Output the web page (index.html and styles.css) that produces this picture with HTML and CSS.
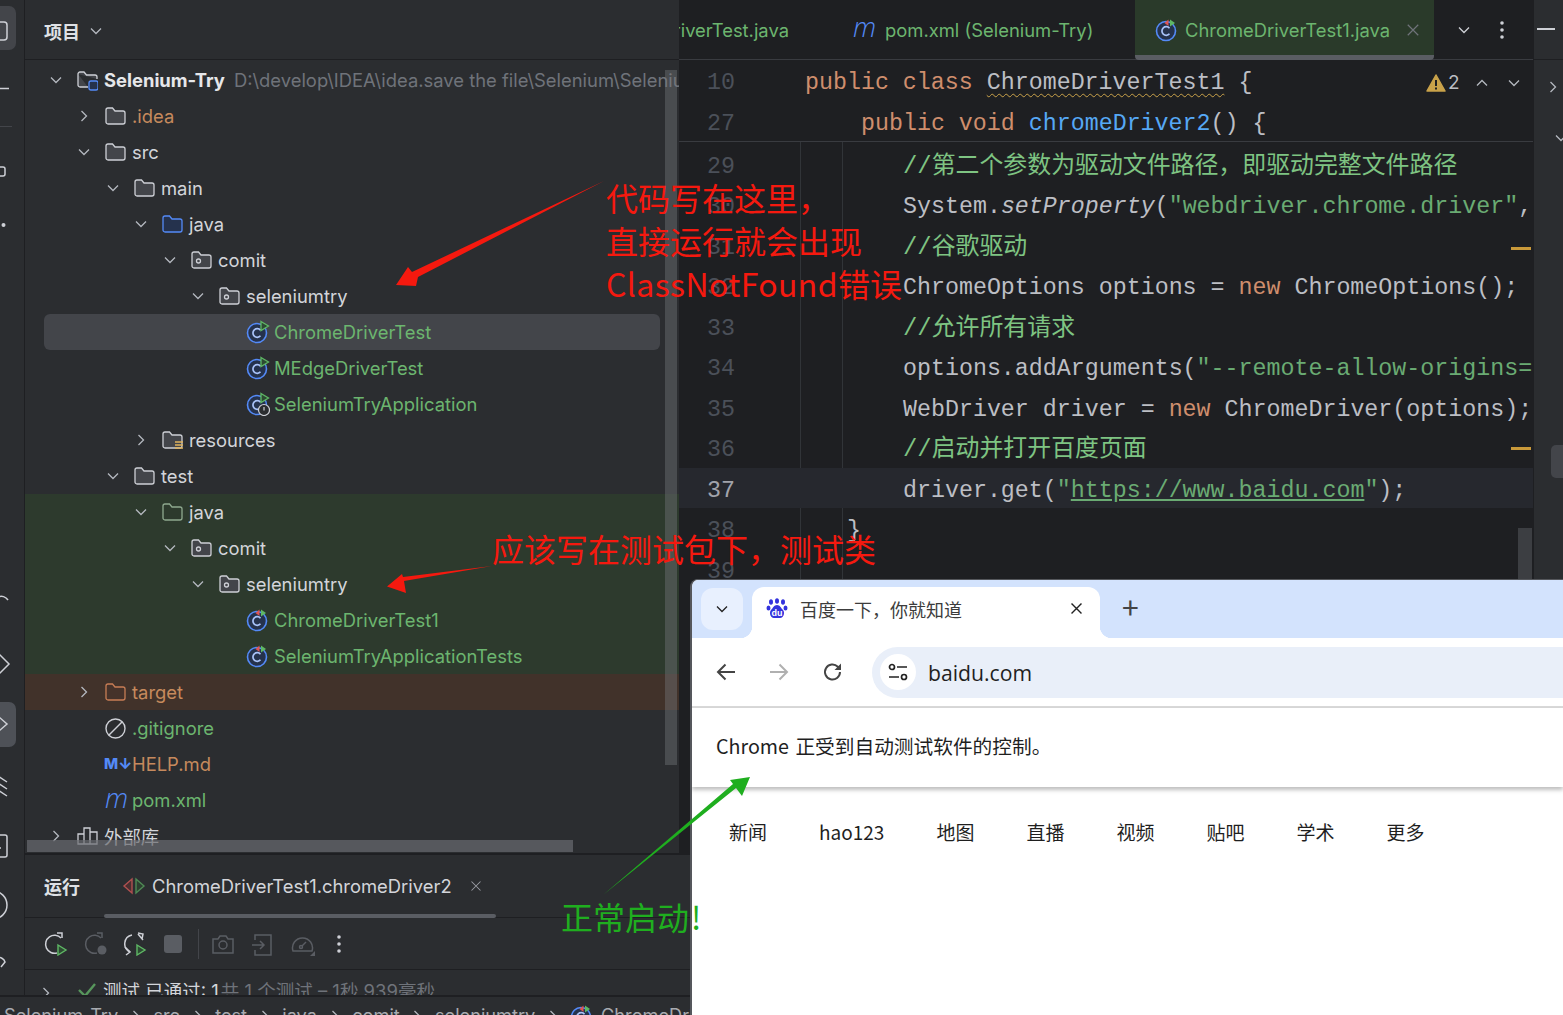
FILE: index.html
```html
<!DOCTYPE html>
<html lang="zh-CN">
<head>
  <meta charset="UTF-8">
  <title>Selenium-Try</title>
  <link rel="stylesheet" href="styles.css">
</head>
<body>
  <svg class="defs" width="0" height="0">
    <symbol id="chev-d" viewBox="0 0 16 16"><path d="M3 5.500l5 5 5-5" fill="none" stroke="currentColor" stroke-width="1.300"/></symbol>
    <symbol id="chev-r" viewBox="0 0 16 16"><path d="M5.500 3l5 5-5 5" fill="none" stroke="currentColor" stroke-width="1.300"/></symbol>
    <symbol id="close" viewBox="0 0 16 16"><path d="M2 2l12 12M14 2L2 14" fill="none" stroke="currentColor" stroke-width="1.400"/></symbol>
    <symbol id="folder" viewBox="0 0 21 18"><path d="M1 3a2 2 0 0 1 2-2h4.500l2.500 3h8a2 2 0 0 1 2 2v9a2 2 0 0 1-2 2H3a2 2 0 0 1-2-2z" fill="#43454a" stroke="#ced0d6" stroke-width="1.300"/></symbol>
    <symbol id="folder-blue" viewBox="0 0 21 18"><path d="M1 3a2 2 0 0 1 2-2h4.500l2.500 3h8a2 2 0 0 1 2 2v9a2 2 0 0 1-2 2H3a2 2 0 0 1-2-2z" fill="#25324d" stroke="#548af7" stroke-width="1.300"/></symbol>
    <symbol id="folder-green" viewBox="0 0 21 18"><path d="M1 3a2 2 0 0 1 2-2h4.500l2.500 3h8a2 2 0 0 1 2 2v9a2 2 0 0 1-2 2H3a2 2 0 0 1-2-2z" fill="#2d3a2d" stroke="#8fa98f" stroke-width="1.300"/></symbol>
    <symbol id="folder-orange" viewBox="0 0 21 18"><path d="M1 3a2 2 0 0 1 2-2h4.500l2.500 3h8a2 2 0 0 1 2 2v9a2 2 0 0 1-2 2H3a2 2 0 0 1-2-2z" fill="#45322a" stroke="#c77d55" stroke-width="1.300"/></symbol>
    <symbol id="folder-pkg" viewBox="0 0 21 18"><path d="M1 3a2 2 0 0 1 2-2h4.500l2.500 3h8a2 2 0 0 1 2 2v9a2 2 0 0 1-2 2H3a2 2 0 0 1-2-2z" fill="#43454a" stroke="#ced0d6" stroke-width="1.300"/><circle cx="7.500" cy="10" r="2" fill="none" stroke="#ced0d6" stroke-width="1.300"/></symbol>
    <symbol id="folder-res" viewBox="0 0 21 18"><path d="M1 3a2 2 0 0 1 2-2h4.500l2.500 3h8a2 2 0 0 1 2 2v9a2 2 0 0 1-2 2H3a2 2 0 0 1-2-2z" fill="#43454a" stroke="#ced0d6" stroke-width="1.300"/><path d="M13 11h8M13 14h8M13 17h8" stroke="#e0b25c" stroke-width="1.300"/></symbol>
    <symbol id="cls" viewBox="0 0 24 24"><circle cx="11" cy="13" r="9.500" fill="#25324d" stroke="#548af7" stroke-width="1.600"/><path d="M14.500 10.200a4.300 4.300 0 1 0 0 5.600" fill="none" stroke="#a9c3f9" stroke-width="1.700"/><path d="M15 1.500l7.500 4.500-7.500 4.500z" fill="#2d4a32" stroke="#5fb865" stroke-width="1.300"/></symbol>
    <symbol id="cls-boot" viewBox="0 0 24 24"><circle cx="11" cy="13" r="9.500" fill="#25324d" stroke="#548af7" stroke-width="1.600"/><path d="M14.500 10.200a4.300 4.300 0 1 0 0 5.600" fill="none" stroke="#a9c3f9" stroke-width="1.700"/><path d="M15 1.500l7.500 4.500-7.500 4.500z" fill="#2d4a32" stroke="#5fb865" stroke-width="1.300"/><circle cx="18" cy="18" r="5.500" fill="#2b2d30" stroke="#ced0d6" stroke-width="1.200"/><path d="M18 15v3.500" stroke="#ced0d6" stroke-width="1.200"/></symbol>
    <symbol id="cls-test" viewBox="0 0 24 24"><circle cx="11" cy="13" r="9.500" fill="#25324d" stroke="#548af7" stroke-width="1.600"/><path d="M14.500 10.200a4.300 4.300 0 1 0 0 5.600" fill="none" stroke="#a9c3f9" stroke-width="1.700"/><path d="M13.500 8V1.500L9.500 5z" fill="#e05555"/><path d="M15 1.500L20 5l-5 3.500z" fill="#5fb865"/></symbol>
  </svg>

  <div class="ide">
    <svg class="tool-stripe" width="25" height="995" viewBox="0 0 25 995">
      <path d="M24.500 0v995" stroke="#1e1f22"/>
      <rect x="-10" y="6" width="26" height="44" rx="7" fill="#43454a"/>
      <rect x="-8" y="22" width="15" height="18" rx="3" fill="none" stroke="#ced0d6" stroke-width="1.500"/>
      <path d="M0 88.500h9" stroke="#ced0d6" stroke-width="1.500"/>
      <path d="M0 126.500h12" stroke="#43454a"/>
      <rect x="-6" y="167" width="11" height="9" rx="2" fill="none" stroke="#ced0d6" stroke-width="1.500"/>
      <circle cx="3.500" cy="225" r="2" fill="#ced0d6"/>
      <path d="M-2 597a8 8 0 0 1 10 3" fill="none" stroke="#ced0d6" stroke-width="1.500"/>
      <path d="M-4 651l13 13-13 13" fill="none" stroke="#ced0d6" stroke-width="1.500"/>
      <rect x="-10" y="702" width="26" height="45" rx="7" fill="#4e5157"/>
      <path d="M-1 717l8 7-8 7" fill="none" stroke="#ced0d6" stroke-width="1.500"/>
      <path d="M-2 776l9 6M-2 783l9 6M-2 790l9 6" fill="none" stroke="#ced0d6" stroke-width="1.500"/>
      <rect x="-8" y="835" width="15" height="22" rx="2" fill="none" stroke="#ced0d6" stroke-width="1.500"/>
      <path d="M-1 848h2" stroke="#ced0d6" stroke-width="1.500"/>
      <circle cx="-7" cy="905" r="14" fill="none" stroke="#ced0d6" stroke-width="1.500"/>
      <path d="M-3 958a6 6 0 0 1 8 4l-4 5" fill="none" stroke="#ced0d6" stroke-width="1.500"/>
    </svg>

    <section class="project">
      <header class="panel-head">
        <span class="panel-title">项目</span>
        <svg class="chev muted"><use href="#chev-d"/></svg>
      </header>
      <div class="tree">
        <div class="row lv0"><svg class="chev"><use href="#chev-d"/></svg>
          <svg class="ico ico-tall" viewBox="0 0 21 21"><path d="M1 4a2 2 0 0 1 2-2h4l2.500 3h8.500a2 2 0 0 1 2 2v2M11 17H3a2 2 0 0 1-2-2V4" fill="#43454a" stroke="#ced0d6" stroke-width="1.300"/><rect x="12" y="11" width="9" height="9" rx="2" fill="#25324d" stroke="#548af7" stroke-width="1.300"/></svg>
          <b class="root-name">Selenium-Try</b><span class="path">D:\develop\IDEA\idea.save the file\Selenium\Selenium-Try</span></div>
        <div class="row lv1"><svg class="chev"><use href="#chev-r"/></svg><svg class="ico"><use href="#folder"/></svg><span class="t-orange">.idea</span></div>
        <div class="row lv1"><svg class="chev"><use href="#chev-d"/></svg><svg class="ico"><use href="#folder"/></svg><span>src</span></div>
        <div class="row lv2"><svg class="chev"><use href="#chev-d"/></svg><svg class="ico"><use href="#folder"/></svg><span>main</span></div>
        <div class="row lv3"><svg class="chev"><use href="#chev-d"/></svg><svg class="ico"><use href="#folder-blue"/></svg><span>java</span></div>
        <div class="row lv4"><svg class="chev"><use href="#chev-d"/></svg><svg class="ico"><use href="#folder-pkg"/></svg><span>comit</span></div>
        <div class="row lv5"><svg class="chev"><use href="#chev-d"/></svg><svg class="ico"><use href="#folder-pkg"/></svg><span>seleniumtry</span></div>
        <div class="row lv6 selected"><span class="chev"></span><svg class="ico-c"><use href="#cls"/></svg><span class="t-green">ChromeDriverTest</span></div>
        <div class="row lv6"><span class="chev"></span><svg class="ico-c"><use href="#cls"/></svg><span class="t-green">MEdgeDriverTest</span></div>
        <div class="row lv6"><span class="chev"></span><svg class="ico-c"><use href="#cls-boot"/></svg><span class="t-green">SeleniumTryApplication</span></div>
        <div class="row lv3"><svg class="chev"><use href="#chev-r"/></svg><svg class="ico"><use href="#folder-res"/></svg><span>resources</span></div>
        <div class="row lv2"><svg class="chev"><use href="#chev-d"/></svg><svg class="ico"><use href="#folder"/></svg><span>test</span></div>
        <div class="row lv3 bg-test"><svg class="chev"><use href="#chev-d"/></svg><svg class="ico"><use href="#folder-green"/></svg><span>java</span></div>
        <div class="row lv4 bg-test"><svg class="chev"><use href="#chev-d"/></svg><svg class="ico"><use href="#folder-pkg"/></svg><span>comit</span></div>
        <div class="row lv5 bg-test"><svg class="chev"><use href="#chev-d"/></svg><svg class="ico"><use href="#folder-pkg"/></svg><span>seleniumtry</span></div>
        <div class="row lv6 bg-test"><span class="chev"></span><svg class="ico-c"><use href="#cls-test"/></svg><span class="t-green">ChromeDriverTest1</span></div>
        <div class="row lv6 bg-test"><span class="chev"></span><svg class="ico-c"><use href="#cls-test"/></svg><span class="t-green">SeleniumTryApplicationTests</span></div>
        <div class="row lv1 bg-target"><svg class="chev"><use href="#chev-r"/></svg><svg class="ico"><use href="#folder-orange"/></svg><span class="t-orange">target</span></div>
        <div class="row lv1"><span class="chev"></span><svg class="ico ico-tall" viewBox="0 0 21 21"><circle cx="10.500" cy="10.500" r="9.500" fill="none" stroke="#ced0d6" stroke-width="1.400"/><path d="M4 17L17 4" stroke="#ced0d6" stroke-width="1.400"/></svg><span class="t-green">.gitignore</span></div>
        <div class="row lv1"><span class="chev"></span><span class="ico md-ico">M↓</span><span class="t-orange">HELP.md</span></div>
        <div class="row lv1"><span class="chev"></span><span class="ico m-ico">m</span><span class="t-green">pom.xml</span></div>
        <div class="row lv0"><svg class="chev"><use href="#chev-r"/></svg><svg class="ico" viewBox="0 0 21 18"><path d="M1 7h6v10H1zM7 1h6v16H7zM13 5h7v12h-7z" fill="none" stroke="#ced0d6" stroke-width="1.300"/></svg><span>外部库</span></div>
      </div>
      <div class="scroll-v"></div>
      <div class="scroll-h"></div>
    </section>

    <section class="editor">
      <div class="tabs">
        <div class="tab tab-cut"><span class="t-green">ChromeDriverTest.java</span></div>
        <div class="tab tab-pom"><span class="m-ico">m</span><span class="t-green">pom.xml (Selenium-Try)</span></div>
        <div class="tab tab-active"><svg class="ico-c"><use href="#cls-test"/></svg><span class="t-green">ChromeDriverTest1.java</span><svg class="tab-x"><use href="#close"/></svg></div>
        <svg class="chev tab-more"><use href="#chev-d"/></svg>
        <svg class="tab-dots" width="4" height="18" viewBox="0 0 4 18"><circle cx="2" cy="2" r="1.800"/><circle cx="2" cy="9" r="1.800"/><circle cx="2" cy="16" r="1.800"/></svg>
      </div>
      <div class="sticky">
        <div class="line"><span class="num">10</span><code class="in0"><i class="kw">public class </i><span class="warn">ChromeDriverTest1</span> {</code></div>
        <div class="line"><span class="num">27</span><code class="in1"><i class="kw">public void </i><i class="fn">chromeDriver2</i>() {</code></div>
        <div class="inspect">
          <svg width="20" height="18" viewBox="0 0 20 18"><path d="M10 1l9 16H1z" fill="#c9a24a" stroke="#c9a24a" stroke-width="1.500" stroke-linejoin="round"/><path d="M10 6v6M10 13.500v2" stroke="#1e1f22" stroke-width="2"/></svg>
          <span class="inspect-n">2</span>
          <svg class="chev up"><use href="#chev-d"/></svg>
          <svg class="chev"><use href="#chev-d"/></svg>
        </div>
      </div>
      <div class="code">
        <div class="line"><span class="num">29</span><code class="in2 cm">//第二个参数为驱动文件路径，即驱动完整文件路径</code></div>
        <div class="line"><span class="num">30</span><code class="in2">System.<em>setProperty</em>(<i class="str">"webdriver.chrome.driver"</i>,</code></div>
        <div class="line"><span class="num">31</span><code class="in2 cm">//谷歌驱动</code></div>
        <div class="line"><span class="num">32</span><code class="in2">ChromeOptions options = <i class="kw">new </i>ChromeOptions();</code></div>
        <div class="line"><span class="num">33</span><code class="in2 cm">//允许所有请求</code></div>
        <div class="line"><span class="num">34</span><code class="in2">options.addArguments(<i class="str">"--remote-allow-origins=*"</i>);</code></div>
        <div class="line"><span class="num">35</span><code class="in2">WebDriver driver = <i class="kw">new </i>ChromeDriver(options);</code></div>
        <div class="line"><span class="num">36</span><code class="in2 cm">//启动并打开百度页面</code></div>
        <div class="line current"><span class="num">37</span><code class="in2">driver.get(<i class="str">"<u>https://www.baidu.com</u>"</i>);</code></div>
        <div class="line"><span class="num">38</span><code class="in3">}</code></div>
        <div class="line"><span class="num">39</span><code class="in0"></code></div>
        <span class="mark mark-a"></span>
        <span class="mark mark-b"></span>
        <span class="scroll-ed"></span>
      </div>
    </section>

    <aside class="right-stripe">
      <div class="rs-top"><span class="rs-min"></span></div>
      <svg class="chev rs-chev"><use href="#chev-r"/></svg>
      <svg class="chev rs-chev2"><use href="#chev-d"/></svg>
      <span class="rs-thumb"></span>
    </aside>

    <section class="run">
      <div class="run-head">
        <span class="panel-title">运行</span>
        <div class="run-tab">
          <svg width="24" height="18" viewBox="0 0 24 18"><path d="M10 2L2 9l8 7z" fill="#4a2f30" stroke="#b05050" stroke-width="1.400"/><path d="M14 2l8 7-8 7z" fill="#2d3f30" stroke="#4f8a55" stroke-width="1.400"/></svg>
          <span>ChromeDriverTest1.chromeDriver2</span>
          <svg class="run-x"><use href="#close"/></svg>
        </div>
      </div>
      <div class="run-tools">
        <svg class="tool" viewBox="0 0 24 24"><path d="M17 6a9 9 0 1 0-4 15" fill="none" stroke="#ced0d6" stroke-width="1.500"/><path d="M13 1h5v5" fill="none" stroke="#ced0d6" stroke-width="1.500"/><path d="M14 13l8 5-8 5z" fill="#2d4a32" stroke="#5fb865" stroke-width="1.400"/></svg>
        <svg class="tool" viewBox="0 0 24 24"><path d="M17 6a9 9 0 1 0-4 15" fill="none" stroke="#5a5d63" stroke-width="1.500"/><path d="M13 1h5v5" fill="none" stroke="#5a5d63" stroke-width="1.500"/><circle cx="18" cy="18" r="4.500" fill="#5a5d63"/></svg>
        <svg class="tool" viewBox="0 0 24 24"><path d="M8 3a9 9 0 0 0-2 17" fill="none" stroke="#ced0d6" stroke-width="1.500"/><path d="M1 15l5 5-4 3M14 1l5 1-1 5M14 2l5 6" fill="none" stroke="#ced0d6" stroke-width="1.500"/><path d="M13 13l8 5-8 5z" fill="#2d4a32" stroke="#5fb865" stroke-width="1.400"/></svg>
        <span class="stop"></span>
        <span class="tool-sep"></span>
        <svg class="tool" viewBox="0 0 24 24"><path d="M2 7h5l2-3h6l2 3h5v14H2z" fill="none" stroke="#5a5d63" stroke-width="1.500"/><circle cx="12" cy="13" r="4" fill="none" stroke="#5a5d63" stroke-width="1.500"/></svg>
        <svg class="tool" viewBox="0 0 24 24"><path d="M4 8V3h16v20H4v-5M1 13h12M9 9l4 4-4 4" fill="none" stroke="#5a5d63" stroke-width="1.500"/></svg>
        <svg class="tool" viewBox="0 0 24 24"><path d="M2 19a10 10 0 1 1 19 0z" fill="none" stroke="#5a5d63" stroke-width="1.500"/><circle cx="10" cy="15" r="1.500" fill="none" stroke="#5a5d63" stroke-width="1.500"/><path d="M11 14l4-4" stroke="#5a5d63" stroke-width="1.500"/><path d="M24 19v5h-5z" fill="#5a5d63"/></svg>
        <svg class="tab-dots run-dots" width="4" height="18" viewBox="0 0 4 18"><circle cx="2" cy="2" r="1.800"/><circle cx="2" cy="9" r="1.800"/><circle cx="2" cy="16" r="1.800"/></svg>
      </div>
      <div class="run-result">
        <svg class="chev"><use href="#chev-r"/></svg>
        <svg width="20" height="18" viewBox="0 0 20 18"><path d="M2 9l6 6L18 3" fill="none" stroke="#57965c" stroke-width="2.400"/></svg>
        <span>测试 已通过: 1</span><span class="dim">共 1 个测试 – 1秒 939毫秒</span>
      </div>
    </section>

    <footer class="status">
      <span>Selenium-Try</span><svg class="chev"><use href="#chev-r"/></svg>
      <span>src</span><svg class="chev"><use href="#chev-r"/></svg>
      <span>test</span><svg class="chev"><use href="#chev-r"/></svg>
      <span>java</span><svg class="chev"><use href="#chev-r"/></svg>
      <span>comit</span><svg class="chev"><use href="#chev-r"/></svg>
      <span>seleniumtry</span><svg class="chev"><use href="#chev-r"/></svg>
      <svg class="ico-c"><use href="#cls-test"/></svg><span class="status-last">ChromeDriverTest1</span>
    </footer>
  </div>

  <div class="browser">
    <div class="strip">
      <span class="tab-search"><svg class="chev"><use href="#chev-d"/></svg></span>
      <div class="b-tab">
        <svg class="paw" width="22" height="22" viewBox="0 0 22 22">
          <ellipse cx="5" cy="4" rx="2" ry="2.800" fill="#3333dd"/><ellipse cx="11" cy="3" rx="2" ry="2.800" fill="#3333dd"/><ellipse cx="17" cy="4" rx="2" ry="2.800" fill="#3333dd"/><ellipse cx="2.500" cy="10" rx="2" ry="2.600" fill="#3333dd"/><ellipse cx="19.500" cy="10" rx="2" ry="2.600" fill="#3333dd"/>
          <path d="M11 7c3 0 4 3 6 5s1 8-3 8H8c-4 0-5-6-3-8s3-5 6-5z" fill="#3333dd"/>
          <text x="11" y="18" class="paw-du">du</text>
        </svg>
        <span class="b-title">百度一下，你就知道</span>
        <svg class="b-x"><use href="#close"/></svg>
      </div>
      <span class="b-plus">+</span>
    </div>
    <div class="toolbar">
      <svg class="nav" viewBox="0 0 20 20"><path d="M19 10H2M9.500 2.500L2 10l7.500 7.500" fill="none" stroke="#444" stroke-width="2"/></svg>
      <svg class="nav" viewBox="0 0 20 20"><path d="M1 10h17M10.500 2.500L18 10l-7.500 7.500" fill="none" stroke="#b0b0b0" stroke-width="2"/></svg>
      <svg class="nav nav-reload" viewBox="0 0 20 20"><path d="M17 10a7.500 7.500 0 1 1-2.200-5.300L17 7" fill="none" stroke="#444" stroke-width="2"/><path d="M18 1.500V8h-6.500z" fill="#444"/></svg>
      <div class="omni">
        <span class="site-ico"><svg width="20" height="20" viewBox="0 0 20 20"><circle cx="4" cy="5" r="2.500" fill="none" stroke="#222" stroke-width="1.700"/><path d="M9 5h10M1 15h10" stroke="#222" stroke-width="1.700"/><circle cx="16" cy="15" r="2.500" fill="none" stroke="#222" stroke-width="1.700"/></svg></span>
        <span class="url">baidu.com</span>
      </div>
    </div>
    <div class="infobar">Chrome 正受到自动测试软件的控制。</div>
    <nav class="baidu-nav">
      <a>新闻</a><a>hao123</a><a>地图</a><a>直播</a><a>视频</a><a>贴吧</a><a>学术</a><a>更多</a>
    </nav>
  </div>

  <svg class="arrows" width="1563" height="1015" viewBox="0 0 1563 1015">
    <polygon points="604,181 418,277 416,286 396,285 408,267 412,272" fill="#f5190f"/>
    <polygon points="492,566 404,581 406,593 387,586.500 402,574 403,577" fill="#f5190f"/>
    <polygon points="603,895 736,788 742,796 750,777 730,780 733,784" fill="#1fae1f"/>
  </svg>
  <div class="note note-red note-a">代码写在这里，<br>直接运行就会出现<br><span class="note-latin">ClassNotFound</span>错误</div>
  <div class="note note-red note-b">应该写在测试包下，测试类</div>
  <div class="note note-green note-c">正常启动<span class="note-bang">!</span></div>
</body>
</html>
```

FILE: styles.css
```css
html, body {
  margin: 0;
  padding: 0;
  height: 100%;
  overflow: hidden;
  background-color: #1e1f22;
}
body {
  position: relative;
  width: 1563px;
  height: 1015px;
  font-family: Inter, "Noto Sans CJK SC", sans-serif;
  font-size: 18.400px;
  color: #d3d5da;
}
.defs {
  position: absolute;
}

/* IDE window */
.ide {
  display: grid;
  grid-template-columns: 25px 654px 1fr 30px;
  grid-template-rows: 853px 142px 20px;
  height: 1015px;
}
.tool-stripe {
  grid-row: 1 / 3;
  background-color: #2b2d30;
}
.chev {
  width: 16px;
  height: 16px;
  flex: none;
  color: #b4b8bf;
}
.ico {
  width: 21px;
  height: 18px;
  flex: none;
}
.ico-tall {
  height: 21px;
}
.ico-c {
  width: 24px;
  height: 24px;
  flex: none;
}

/* project tree */
.project {
  position: relative;
  background-color: #2b2d30;
  overflow: hidden;
}
.panel-head {
  display: flex;
  align-items: center;
  gap: 8px;
  height: 60px;
  padding: 2px 0 0 19px;
  box-sizing: border-box;
  border-bottom: 1px solid #1e1f22;
}
.panel-title {
  font-size: 18px;
  font-weight: 700;
  color: #dfe1e5;
}
.tree {
  padding-top: 2px;
}
.row {
  display: flex;
  align-items: center;
  height: 36px;
  white-space: nowrap;
  overflow: hidden;
}
.row .chev {
  margin-right: 13px;
}
.row .ico {
  margin-right: 6px;
}
.row .ico-c {
  margin: 0 4px 0 -1px;
}
.lv0 { padding-left: 23px; }
.lv1 { padding-left: 51px; }
.lv2 { padding-left: 80px; }
.lv3 { padding-left: 108px; }
.lv4 { padding-left: 137px; }
.lv5 { padding-left: 165px; }
.lv6 { padding-left: 193px; }
.selected {
  background-color: #43454a;
  border-radius: 6px;
  margin: 0 19px;
  padding-left: 174px;
}
.bg-test { background-color: #2d3a2d; }
.bg-target { background-color: #41322a; }
.root-name {
  font-weight: 700;
  color: #e6e7ea;
  margin-right: 9px;
}
.path { color: #6f737a; }
.t-orange { color: #c68a5d; }
.t-green { color: #6cb56f; }
.row .md-ico {
  width: 23px;
  margin: 0 5px 0 -1px;
  font-size: 15px;
  font-weight: 800;
  color: #548af7;
  white-space: nowrap;
  line-height: 18px;
}
.m-ico {
  font-family: "Open Sans", sans-serif;
  font-style: italic;
  font-weight: 300;
  font-size: 27px;
  line-height: 18px;
  color: #548af7;
}
.row .m-ico {
  margin-top: -5px;
}
.scroll-v {
  position: absolute;
  left: 640px;
  top: 70px;
  width: 12px;
  height: 695px;
  background-color: rgba(120, 122, 128, 0.4);
}
.scroll-h {
  position: absolute;
  left: 2px;
  top: 840px;
  width: 546px;
  height: 12px;
  background-color: rgba(105, 107, 112, 0.7);
}

/* editor */
.editor {
  position: relative;
  background-color: #1e1f22;
  overflow: hidden;
  min-width: 0;
}
.tabs {
  display: flex;
  align-items: center;
  height: 60px;
  box-sizing: border-box;
  border-bottom: 1px solid #393b40;
  white-space: nowrap;
}
.tab {
  display: flex;
  align-items: center;
  height: 100%;
  box-sizing: border-box;
  flex: none;
}
.tab-cut {
  width: 146px;
  justify-content: flex-end;
  padding-right: 36px;
  overflow: hidden;
}
.tab-pom {
  width: 310px;
  padding-left: 28px;
  gap: 10px;
}
.tab-pom .m-ico {
  width: 22px;
  margin-top: -5px;
}
.tab-active {
  width: 299px;
  height: 60px;
  padding: 5px 0 0 20px;
  gap: 6px;
  background-color: #2a3a2a;
  border-bottom: 5px solid #5a5d63;
  border-radius: 0 0 4px 4px;
}
.tab-x {
  width: 14px;
  height: 14px;
  margin-left: 10px;
  color: #6f737a;
}
.tab-more {
  margin-left: 22px;
  color: #ced0d6;
}
.tab-dots {
  margin-left: 28px;
  fill: #ced0d6;
}
.sticky {
  position: relative;
  border-bottom: 1px solid #393b40;
}
.line {
  display: flex;
  height: 40.700px;
  line-height: 46.700px;
  white-space: nowrap;
  overflow: hidden;
}
.num {
  width: 56px;
  text-align: right;
  flex: none;
  font-family: "Liberation Mono", monospace;
  font-size: 23.300px;
  color: #4b5059;
}
code {
  font-family: "Liberation Mono", "Noto Sans CJK SC", monospace;
  font-size: 23.300px;
  color: #bcbec4;
}
code i { font-style: normal; }
code em { font-style: italic; }
.in0 { padding-left: 70px; }
.in1 { padding-left: 126px; }
.in2 { padding-left: 168px; }
.in3 { padding-left: 112px; }
.kw { color: #cf8e6d; }
.fn { color: #56a8f5; }
.str { color: #6aab73; }
.cm { color: #7ec482; font-size: 23.900px; }
.warn {
  text-decoration: underline wavy #c9a24a 1px;
  text-underline-offset: 4px;
}
.inspect {
  position: absolute;
  top: 11px;
  left: 747px;
  display: flex;
  align-items: center;
  gap: 2px;
}
.inspect-n {
  color: #bcbec4;
  font-size: 19px;
  margin-right: 12px;
}
.inspect .chev { margin-right: 14px; }
.up { transform: rotate(180deg); }
.code {
  position: relative;
  padding-top: 1.600px;
  background-image: linear-gradient(#313438, #313438), linear-gradient(#313438, #313438);
  background-size: 1px 100%, 1px 100%;
  background-position: 121px 0, 163px 0;
  background-repeat: no-repeat;
}
.code .line {
  height: 40.500px;
}
.current {
  background-color: #26282e;
}
.current .num { color: #a1a3ab; }
.mark {
  position: absolute;
  left: 832px;
  width: 20px;
  height: 3px;
  background-color: #c9993a;
}
.mark-a { top: 105px; }
.mark-b { top: 305px; }
.scroll-ed {
  position: absolute;
  left: 839px;
  top: 386px;
  width: 14px;
  height: 60px;
  background-color: #3c3e42;
}

/* right tool window bar */
.right-stripe {
  position: relative;
  background-color: #2b2d30;
  border-left: 1px solid #1e1f22;
  overflow: hidden;
}
.rs-top {
  height: 60px;
  border-bottom: 1px solid #1e1f22;
  box-sizing: border-box;
}
.rs-min {
  position: absolute;
  left: 3px;
  top: 28px;
  width: 18px;
  height: 2px;
  background-color: #ced0d6;
}
.rs-chev {
  position: absolute;
  left: 11px;
  top: 79px;
}
.rs-chev2 {
  position: absolute;
  left: 19px;
  top: 130px;
}
.rs-thumb {
  position: absolute;
  left: 17px;
  top: 445px;
  width: 20px;
  height: 33px;
  border-radius: 5px;
  background-color: #43454a;
}

/* run panel */
.run {
  grid-column: 2 / 5;
  background-color: #2b2d30;
  border-top: 2px solid #1e1f22;
  box-sizing: border-box;
  overflow: hidden;
}
.run-head {
  display: flex;
  align-items: center;
  height: 62px;
  padding-left: 19px;
  border-bottom: 1px solid #1e1f22;
  position: relative;
}
.run-tab {
  display: flex;
  align-items: center;
  gap: 6px;
  margin-left: 42px;
}
.run-tab::after {
  content: "";
  position: absolute;
  left: 79px;
  bottom: -1px;
  width: 392px;
  height: 4px;
  border-radius: 2px;
  background-color: #5a5d63;
}
.run-x {
  width: 12px;
  height: 12px;
  margin-left: 12px;
  color: #9a9da3;
}
.run-tools {
  display: flex;
  align-items: center;
  height: 51px;
  padding-left: 19px;
  border-bottom: 1px solid #1e1f22;
}
.tool {
  width: 24px;
  height: 24px;
  margin-right: 16px;
  flex: none;
}
.stop {
  width: 18px;
  height: 18px;
  border-radius: 3px;
  background-color: #5a5d63;
  margin: 0 16px 0 0;
  flex: none;
}
.tool-sep {
  width: 1px;
  height: 30px;
  background-color: #43454a;
  margin-right: 12px;
}
.run-dots { margin-left: 6px; }
.run-result {
  display: flex;
  align-items: center;
  height: 40px;
  padding-left: 13px;
  font-size: 18.500px;
  white-space: nowrap;
}
.run-result .chev { margin: 6px 23px 0 0; }
.run-result svg + svg { margin-right: 6px; }
.dim {
  color: #6f737a;
  margin-left: 2px;
}

/* breadcrumb bar */
.status {
  grid-column: 1 / 5;
  display: flex;
  align-items: flex-start;
  gap: 9.600px;
  padding: 7px 0 0 4px;
  background-color: #2b2d30;
  border-top: 2px solid #1e1f22;
  box-sizing: border-box;
  height: 20px;
  overflow: hidden;
  white-space: nowrap;
  font-size: 18.200px;
  color: #a8abb0;
  line-height: 22px;
}
.status .chev { margin-top: 4px; }
.status-last { margin-left: -3px; }

/* chrome window on top */
.browser {
  position: absolute;
  left: 690px;
  top: 579px;
  width: 873px;
  height: 436px;
  background-color: #fff;
  border-left: 2px solid #55575c;
  border-top: 1px solid #55575c;
  border-top-left-radius: 8px;
  box-sizing: border-box;
  overflow: hidden;
  font-family: "Noto Sans CJK SC", sans-serif;
  color: #1f1f1f;
}
.strip {
  display: flex;
  align-items: flex-end;
  height: 58px;
  background-color: #d3e3fd;
  padding-left: 9px;
}
.tab-search {
  display: flex;
  align-items: center;
  justify-content: center;
  align-self: flex-start;
  margin-top: 8px;
  width: 42px;
  height: 42px;
  border-radius: 12px;
  background-color: #e8f0fe;
}
.tab-search .chev { color: #222; }
.b-tab {
  position: relative;
  display: flex;
  align-items: center;
  width: 348px;
  height: 51px;
  margin-left: 9px;
  padding: 0 17px 8px 14px;
  box-sizing: border-box;
  background-color: #fff;
  border-radius: 12px 12px 0 0;
}
.b-tab::before,
.b-tab::after {
  content: "";
  position: absolute;
  bottom: 0;
  width: 12px;
  height: 12px;
}
.b-tab::before {
  left: -12px;
  background: radial-gradient(circle at 0 0, #d3e3fd 12px, #fff 12.500px);
}
.b-tab::after {
  right: -12px;
  background: radial-gradient(circle at 100% 0, #d3e3fd 12px, #fff 12.500px);
}
.paw {
  flex: none;
  margin-right: 12px;
}
.paw-du {
  font-family: "Liberation Sans", sans-serif;
  font-size: 9px;
  font-weight: 700;
  fill: #fff;
  text-anchor: middle;
}
.b-title {
  flex: 1;
  font-size: 18px;
  color: #3c3c3c;
}
.b-x {
  width: 13px;
  height: 13px;
  flex: none;
  color: #222;
  filter: drop-shadow(0.4px 0 0 #222);
}
.b-plus {
  align-self: flex-start;
  margin: 8px 0 0 22px;
  font-size: 30px;
  line-height: 36px;
  color: #444;
}
.toolbar {
  display: flex;
  align-items: center;
  height: 70px;
  padding-left: 24px;
  border-bottom: 2px solid #d9d9d9;
  box-sizing: border-box;
  background-color: #fff;
  border-top-left-radius: 10px;
}
.nav {
  width: 20px;
  height: 20px;
  margin-right: 33px;
  flex: none;
}
.nav-reload { margin-left: 1px; }
.omni {
  display: flex;
  align-items: center;
  flex: 1;
  height: 51px;
  margin-left: -4px;
  padding-left: 8px;
  border-radius: 26px 0 0 26px;
  background-color: #e9eff9;
}
.site-ico {
  display: flex;
  align-items: center;
  justify-content: center;
  width: 36px;
  height: 36px;
  border-radius: 50%;
  background-color: #fff;
}
.url {
  margin-left: 12px;
  font-family: "Open Sans", sans-serif;
  font-size: 21.200px;
  color: #1f1f1f;
}
.infobar {
  display: flex;
  align-items: center;
  height: 79px;
  padding: 0 0 4px 24px;
  box-sizing: border-box;
  font-size: 19.700px;
  word-spacing: 2px;
  box-shadow: 0 3px 4px rgba(0, 0, 0, 0.25);
}
.baidu-nav {
  display: flex;
  gap: 52px;
  padding: 31px 0 0 37px;
  font-size: 19px;
  line-height: 28px;
}

/* hand drawn notes over the screenshot */
.arrows {
  position: absolute;
  left: 0;
  top: 0;
  pointer-events: none;
}
.note {
  position: absolute;
  font-family: "Noto Sans CJK SC", sans-serif;
  font-size: 32px;
  font-weight: 400;
  line-height: 43px;
  white-space: nowrap;
}
.note-latin { letter-spacing: 0.400px; }
.note-bang { margin-left: 2px; }
.note-red { color: #f5190f; }
.note-green { color: #1fae1f; }
.note-a { left: 606px; top: 176px; }
.note-b { left: 492px; top: 527px; }
.note-c { left: 561px; top: 895px; }
```
